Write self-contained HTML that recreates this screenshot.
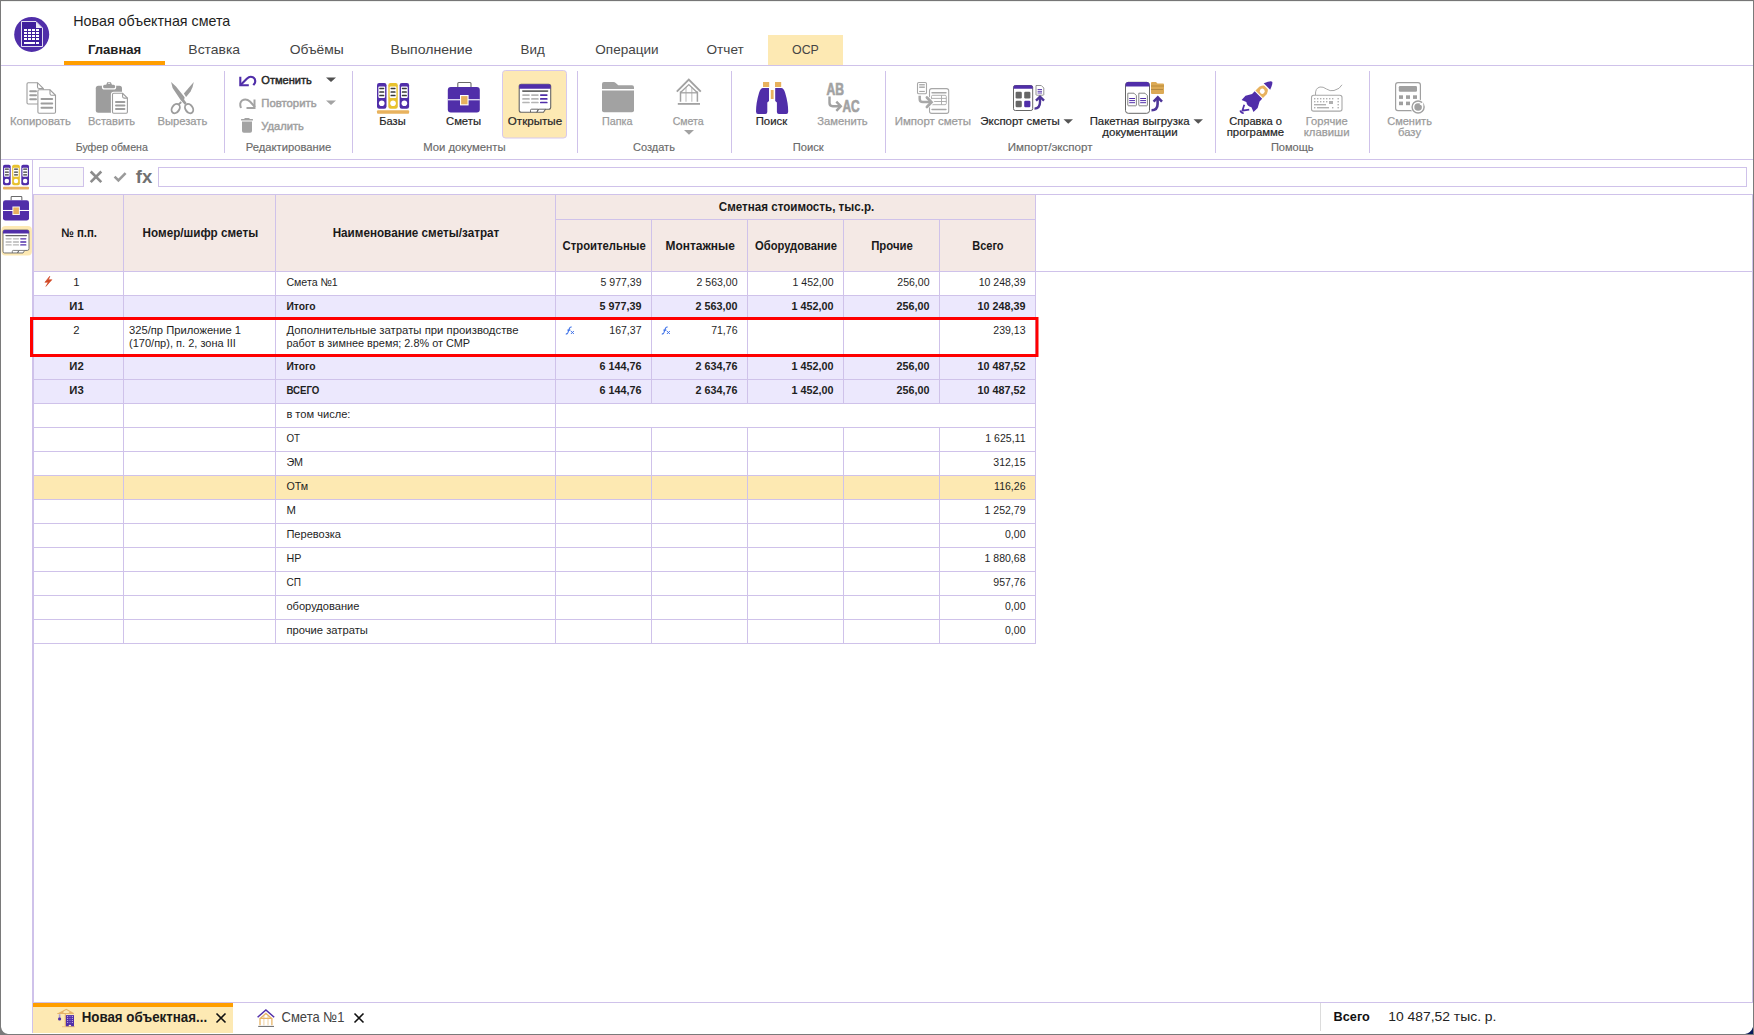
<!DOCTYPE html>
<html><head><meta charset="utf-8"><style>
html,body{margin:0;padding:0;width:1754px;height:1035px;overflow:hidden;background:#fff}
svg{display:block}
text{font-family:"Liberation Sans", sans-serif;white-space:pre}
</style></head><body>
<svg width="1754" height="1035" viewBox="0 0 1754 1035">
<rect width="1754" height="1035" fill="#fff"/>
<rect x="34" y="195" width="1001" height="76" fill="#f4e9e5"/>
<rect x="34" y="296" width="1001" height="23" fill="#ece8fd"/>
<rect x="34" y="356" width="1001" height="23" fill="#ece8fd"/>
<rect x="34" y="380" width="1001" height="23" fill="#ece8fd"/>
<rect x="34" y="476" width="1001" height="23" fill="#fde9b2"/>
<rect x="33" y="194" width="1719" height="1" fill="#cfc2ea"/>
<rect x="33" y="271" width="1719" height="1" fill="#cfc2ea"/>
<rect x="555" y="219" width="481" height="1" fill="#cfc2ea"/>
<rect x="33" y="295" width="1003" height="1" fill="#cfc2ea"/>
<rect x="33" y="319" width="1003" height="1" fill="#cfc2ea"/>
<rect x="33" y="355" width="1003" height="1" fill="#cfc2ea"/>
<rect x="33" y="379" width="1003" height="1" fill="#cfc2ea"/>
<rect x="33" y="403" width="1003" height="1" fill="#cfc2ea"/>
<rect x="33" y="427" width="1003" height="1" fill="#cfc2ea"/>
<rect x="33" y="451" width="1003" height="1" fill="#cfc2ea"/>
<rect x="33" y="475" width="1003" height="1" fill="#cfc2ea"/>
<rect x="33" y="499" width="1003" height="1" fill="#cfc2ea"/>
<rect x="33" y="523" width="1003" height="1" fill="#cfc2ea"/>
<rect x="33" y="547" width="1003" height="1" fill="#cfc2ea"/>
<rect x="33" y="571" width="1003" height="1" fill="#cfc2ea"/>
<rect x="33" y="595" width="1003" height="1" fill="#cfc2ea"/>
<rect x="33" y="619" width="1003" height="1" fill="#cfc2ea"/>
<rect x="33" y="643" width="1003" height="1" fill="#cfc2ea"/>
<rect x="123" y="194" width="1" height="449" fill="#cfc2ea"/>
<rect x="275" y="194" width="1" height="449" fill="#cfc2ea"/>
<rect x="555" y="194" width="1" height="449" fill="#cfc2ea"/>
<rect x="651" y="219" width="1" height="184" fill="#cfc2ea"/>
<rect x="651" y="427" width="1" height="216" fill="#cfc2ea"/>
<rect x="747" y="219" width="1" height="184" fill="#cfc2ea"/>
<rect x="747" y="427" width="1" height="216" fill="#cfc2ea"/>
<rect x="843" y="219" width="1" height="184" fill="#cfc2ea"/>
<rect x="843" y="427" width="1" height="216" fill="#cfc2ea"/>
<rect x="939" y="219" width="1" height="184" fill="#cfc2ea"/>
<rect x="939" y="427" width="1" height="216" fill="#cfc2ea"/>
<rect x="1035" y="194" width="1" height="449" fill="#cfc2ea"/>
<rect x="32" y="160" width="1" height="873" fill="#cfc2ea"/>
<rect x="33" y="194" width="1" height="808" fill="#cfc2ea"/>
<!-- ===== chrome ===== -->
<rect x="0" y="0" width="1754" height="1" fill="#767676"/>
<rect x="1" y="1" width="1752" height="1" fill="#eff1ef"/>
<rect x="0" y="0" width="1" height="1035" fill="#7a7a7a"/>
<rect x="1753" y="0" width="1" height="1035" fill="#7a7a7a"/>
<rect x="0" y="1034" width="1754" height="1" fill="#7a7a7a"/>
<!-- tabs -->
<rect x="768" y="35" width="75" height="30" fill="#fde9b3"/>
<rect x="64" y="61" width="101" height="4" fill="#ff9e00"/>
<rect x="1" y="65" width="1752" height="1" fill="#cfc2ea"/>
<!-- ribbon separators -->
<g fill="#cfc2ea">
<rect x="224" y="71" width="1" height="82"/><rect x="352" y="71" width="1" height="82"/><rect x="577" y="71" width="1" height="82"/>
<rect x="731" y="71" width="1" height="82"/><rect x="885" y="71" width="1" height="82"/><rect x="1215" y="71" width="1" height="82"/>
<rect x="1369" y="71" width="1" height="82"/>
</g>
<rect x="1" y="159" width="1752" height="1" fill="#cfc2ea"/>
<rect x="502.5" y="70.5" width="64" height="67.5" rx="3" fill="#fde9b3" stroke="#d6c8ee" stroke-width="1"/>
<!-- formula bar -->
<rect x="39.5" y="167.5" width="44" height="19" fill="#f8f8f8" stroke="#cfc2ea"/>
<rect x="158.5" y="167.5" width="1588" height="19" fill="#fff" stroke="#cfc2ea"/>
<path d="M90.7 171.5 L101.3 182.2 M101.3 171.5 L90.7 182.2" stroke="#8c8c8c" stroke-width="2.6"/>
<path d="M114.6 176.6 L118.4 180.4 L125.6 173.2" stroke="#9a9a9a" stroke-width="2.6" fill="none"/>
<text x="135.8" y="183" font-size="19" font-weight="bold" fill="#717171" font-family="Liberation Sans" textLength="16.5" lengthAdjust="spacingAndGlyphs">fx</text>
<!-- content right border -->
<rect x="1752" y="194" width="1" height="808" fill="#cfc2ea"/>
<rect x="33" y="1002" width="1720" height="1" fill="#cfc2ea"/>
<!-- red box -->
<rect x="31.5" y="318.5" width="1005.5" height="37" fill="none" stroke="#ff0000" stroke-width="3"/>
<!-- bottom tabs -->
<rect x="33" y="1003" width="200" height="4" fill="#ff9e00"/>
<rect x="33" y="1007" width="200" height="26" fill="#fde9b3"/>
<path d="M216.5 1013.5 L225.5 1022.5 M225.5 1013.5 L216.5 1022.5" stroke="#111" stroke-width="1.6"/>
<path d="M354.5 1013.5 L363.5 1022.5 M363.5 1013.5 L354.5 1022.5" stroke="#111" stroke-width="1.6"/>
<rect x="1320" y="1003" width="1" height="28" fill="#dcdcdc"/>
<path d="M1753 1027 V1034 H1745 Q1751 1033 1753 1027 Z" fill="#0a1a5a"/>
<path d="M1 1027 Q2 1033 8 1034 H1 Z" fill="#7a7a7a"/>

<!-- ===== app logo ===== -->
<circle cx="31.7" cy="34.4" r="17.5" fill="#502ea9"/>
<path d="M21.5 21.5 H36 L42.5 28 V46.5 H21.5 Z" fill="#3f1f9c" stroke="#fff" stroke-width="1" stroke-opacity="0.85"/>
<path d="M36 21.8 L42.2 28 H36 Z" fill="#fff" opacity="0.9"/>
<g fill="#fff">
<rect x="24" y="29" width="3" height="2"/><rect x="28" y="29" width="3" height="2"/><rect x="32" y="29" width="3" height="2"/><rect x="36" y="29" width="3" height="2"/>
<rect x="24" y="32" width="3" height="2"/><rect x="28" y="32" width="3" height="2"/><rect x="32" y="32" width="3" height="2"/><rect x="36" y="32" width="3" height="2"/>
<rect x="24" y="35" width="3" height="2"/><rect x="28" y="35" width="3" height="2"/><rect x="32" y="35" width="3" height="2"/><rect x="36" y="35" width="3" height="2"/>
<rect x="24" y="38" width="3" height="2"/><rect x="28" y="38" width="3" height="2"/><rect x="32" y="38" width="3" height="2"/><rect x="36" y="38" width="3" height="2"/>
<rect x="24" y="42" width="11" height="2"/><rect x="36" y="42" width="3" height="2"/>
</g>

<!-- ===== copy ===== -->
<g stroke="#9d9d9d" fill="#fff" stroke-width="1.1">
<path d="M28.2 82.7 H37.5 L43.3 88.5 V102.8 Q43.3 104 42.1 104 H28.2 Q27 104 27 102.8 V83.9 Q27 82.7 28.2 82.7 Z"/>
<path d="M37.5 82.7 V86.9 Q37.5 88.5 39.1 88.5 H43.3" fill="none"/>
<path d="M39.1 89.8 H50 L55.5 95.3 V112.1 Q55.5 113.3 54.3 113.3 H39.1 Q37.9 113.3 37.9 112.1 V91 Q37.9 89.8 39.1 89.8 Z"/>
<path d="M50 89.8 V93.7 Q50 95.3 51.6 95.3 H55.5" fill="none"/>
</g>
<g stroke="#9d9d9d" stroke-width="2" stroke-linecap="round">
<path d="M30.2 91.2 H36 M30.2 95.3 H36 M30.2 99.3 H36"/>
<path d="M41.5 99.1 H52.2 M41.5 103.4 H52.2 M41.5 107.7 H52.2"/>
</g>
<!-- paste -->
<rect x="95.8" y="85.8" width="26.2" height="27" rx="2.5" fill="#9d9d9d"/>
<rect x="101.9" y="83.9" width="14.3" height="5.6" rx="2.6" fill="#fff"/>
<path d="M106 85.5 L107.2 82.3 H110.9 L112.2 85.5 Z" fill="#9d9d9d"/>
<rect x="103.1" y="84.8" width="12" height="3.4" rx="1.5" fill="#9d9d9d"/>
<rect x="108" y="82.9" width="2.2" height="1.1" rx="0.5" fill="#e6e6e6"/>
<path d="M113.7 93.3 H122.6 L127.4 98.1 V112.1 Q127.4 113.3 126.2 113.3 H113.7 Q112.5 113.3 112.5 112.1 V94.5 Q112.5 93.3 113.7 93.3 Z" fill="#fff" stroke="#fff" stroke-width="3.2"/>
<path d="M113.7 93.3 H122.6 L127.4 98.1 V112.1 Q127.4 113.3 126.2 113.3 H113.7 Q112.5 113.3 112.5 112.1 V94.5 Q112.5 93.3 113.7 93.3 Z" fill="#fff" stroke="#9d9d9d" stroke-width="1.1"/>
<path d="M122.6 93.3 V96.6 Q122.6 98.1 124.1 98.1 H127.4" fill="none" stroke="#9d9d9d" stroke-width="1.1"/>
<path d="M116 102 H124.4 M116 105.5 H124.4 M116 109 H124.4" stroke="#9d9d9d" stroke-width="2" stroke-linecap="round"/>
<!-- scissors -->
<g fill="#9d9d9d">
<path d="M171.1 82.1 L176 86.4 L184.6 97.2 L184.2 99.8 L186.6 102.9 L184.8 104.8 L180.8 100.3 L172.6 88 Z"/>
<path d="M193.8 82.1 Q193 87.5 190.6 91.4 L186.1 97.1 L183.9 93.6 L189 87.4 Z"/>
</g>
<g fill="none" stroke="#9d9d9d" stroke-width="1.9">
<ellipse cx="175.7" cy="108.6" rx="3.6" ry="5" transform="rotate(35 175.7 108.6)"/>
<ellipse cx="189.1" cy="108.6" rx="3.6" ry="5" transform="rotate(-35 189.1 108.6)"/>
<path d="M178.6 104.6 L181.2 102"/>
</g>
<!-- undo / redo / delete -->
<g transform="translate(0.8 -0.8)"><path d="M240 85.5 L246 79.5 Q249 76.5 252 78 Q255.5 80 254 84 L252.5 86" fill="none" stroke="#502ea9" stroke-width="2.1"/>
<path d="M239.5 77.5 V86 H248" fill="none" stroke="#502ea9" stroke-width="2.1"/></g>
<path d="M241 108 Q239 103 242 100.5 Q246 98 250 101.5 L255 107" fill="none" stroke="#a3a3a3" stroke-width="2"/>
<path d="M254.5 99.5 V108 H246.5" fill="none" stroke="#a3a3a3" stroke-width="2"/>
<g fill="#a3a3a3">
<rect x="241" y="119" width="12" height="1.6" rx="0.5"/><rect x="244.5" y="118" width="5" height="1.5"/>
<path d="M242 121.5 H252 V131 Q252 132.8 250.2 132.8 H243.8 Q242 132.8 242 131 Z"/>
</g>
<path d="M326 77.5 H336 L331 82 Z" fill="#505050"/>
<path d="M326 100.5 H336 L331 105 Z" fill="#a3a3a3"/>
<!-- ===== Базы (binders) ===== -->
<g id="binders">
<rect x="377" y="83" width="9.5" height="25.7" rx="2.2" fill="#502ea9"/>
<rect x="378.4" y="86.6" width="6.7" height="11.3" rx="0.8" fill="#fff"/>
<circle cx="381.75" cy="103.3" r="2.8" fill="#fff"/>
<rect x="379.2" y="87.65" width="5.1" height="1.5" rx="0.6" fill="#3a3a3a"/>
<rect x="379.2" y="91.35" width="5.1" height="1.5" rx="0.6" fill="#3a3a3a"/>
<rect x="379.2" y="94.75" width="5.1" height="1.5" rx="0.6" fill="#3a3a3a"/>
<rect x="388.3" y="83" width="9.5" height="25.7" rx="2.2" fill="#e8c22e"/>
<rect x="389.7" y="86.6" width="6.7" height="11.3" rx="0.8" fill="#fff"/>
<circle cx="393.05" cy="103.3" r="2.8" fill="#fff"/>
<rect x="390.5" y="87.65" width="5.1" height="1.5" rx="0.6" fill="#3a3a3a"/>
<rect x="390.5" y="91.35" width="5.1" height="1.5" rx="0.6" fill="#3a3a3a"/>
<rect x="390.5" y="94.75" width="5.1" height="1.5" rx="0.6" fill="#3a3a3a"/>
<rect x="399.6" y="83" width="9.5" height="25.7" rx="2.2" fill="#502ea9"/>
<rect x="401.0" y="86.6" width="6.7" height="11.3" rx="0.8" fill="#fff"/>
<circle cx="404.35" cy="103.3" r="2.8" fill="#fff"/>
<rect x="401.8" y="87.65" width="5.1" height="1.5" rx="0.6" fill="#3a3a3a"/>
<rect x="401.8" y="91.35" width="5.1" height="1.5" rx="0.6" fill="#3a3a3a"/>
<rect x="401.8" y="94.75" width="5.1" height="1.5" rx="0.6" fill="#3a3a3a"/>
<rect x="377" y="110.3" width="32.1" height="3.5" rx="1" fill="#e8b25e"/>
</g>
<!-- ===== Сметы (briefcase) ===== -->
<g id="brief">
<path d="M457.8 87 V83.5 Q457.8 82.5 458.8 82.5 H470 Q471 82.5 471 83.5 V87" fill="none" stroke="#6a6a6a" stroke-width="1.1"/>
<rect x="447.8" y="87" width="32" height="25.5" rx="3" fill="#502ea9"/>
<rect x="447.8" y="99.2" width="32" height="1.1" fill="#fff"/>
<rect x="460" y="95" width="8.6" height="10.4" fill="#fff"/>
<rect x="461.1" y="96.1" width="6.4" height="8.2" fill="#e8b25e"/>
</g>
<!-- ===== Открытые (window) ===== -->
<g transform="translate(519.2 84.3)">
<path d="M2 0 H29.5 Q31.5 0 31.5 2 V22.9 Q31.5 24.9 29.5 24.9 H26.3 L24.3 28 H2 Q0 28 0 26 V2 Q0 0 2 0 Z" fill="#fff" stroke="#666" stroke-width="1.1"/>
<path d="M0 4.4 V2 Q0 0 2 0 H29.5 Q31.5 0 31.5 2 V4.4 Z" fill="#502ea9"/>
<path d="M11.3 28 V26 Q11.3 24.9 12.4 24.9 H19.1 L17.6 28 M17.8 28 L19.4 24.9 H26.3" fill="none" stroke="#666" stroke-width="1"/>
<path d="M3.6 6.8 H28.4" stroke="#666" stroke-width="1.6" stroke-linecap="round"/>
<path d="M3.8 10.8 H9.8 M12.7 10.8 H18.7 M3.8 14.6 H9.8 M12.7 14.6 H18.7 M3.8 18.2 H9.8 M12.7 18.2 H18.7" stroke="#b5b5b5" stroke-width="1.7" stroke-linecap="round"/>
<path d="M21.6 10.8 H27.6 M21.6 14.6 H27.6 M21.6 18.2 H27.6" stroke="#502ea9" stroke-width="1.7" stroke-linecap="round"/>
</g>
<!-- ===== Папка (folder) ===== -->
<path d="M602 84 Q602 82.1 603.9 82.1 H613.3 Q614.8 82.1 616 83.2 L618.3 85.3 H632 Q634 85.3 634 87.3 V89 H602 Z" fill="#a2a2a2"/>
<path d="M602 90.5 H634 V110.2 Q634 112.2 632 112.2 H604 Q602 112.2 602 110.2 Z" fill="#a2a2a2"/>
<!-- ===== Смета (house) ===== -->
<g fill="none">
<path d="M676.8 91.6 L688.8 79.6 L700.8 91.6" stroke="#a2a2a2" stroke-width="1.9"/>
<path d="M686 87 V101.8 M691.8 87 V101.8" stroke="#cacaca" stroke-width="1.3"/>
<path d="M680.5 92.5 L688.8 84.6 L697.2 92.5" stroke="#a2a2a2" stroke-width="1.4"/>
<path d="M680.5 91.5 V101.8 M697.4 91.5 V101.8" stroke="#a2a2a2" stroke-width="1.5"/>
<path d="M680.5 92.8 H697.4" stroke="#a2a2a2" stroke-width="1.3"/>
</g>
<rect x="677.8" y="103" width="22.2" height="1.8" fill="#a2a2a2"/>
<path d="M684 130 H694 L689 134.8 Z" fill="#a2a2a2"/>
<!-- ===== Поиск (binoculars) ===== -->
<g fill="#502ea9">
<path d="M763 88 H769 V101 L767.3 102.5 V112 Q767.3 114 765.3 114 H758 Q756 114 756 111.5 Q756 103 759 93 Q760.5 88 763 88 Z"/>
<path d="M781.2 88 H775.2 V101 L776.9 102.5 V112 Q776.9 114 778.9 114 H786.2 Q788.2 114 788.2 111.5 Q788.2 103 785.2 93 Q783.7 88 781.2 88 Z"/>
</g>
<g fill="#e8b25e">
<rect x="763" y="82" width="6.2" height="5"/><rect x="775" y="82" width="6.2" height="5"/>
<rect x="770.8" y="90" width="2.8" height="9"/>
</g>
<!-- ===== Заменить (AB->AC) ===== -->
<text x="826.5" y="95" font-size="17" font-weight="bold" fill="#a2a2a2" stroke="#a2a2a2" stroke-width="0.7" font-family="Liberation Sans" textLength="17.5" lengthAdjust="spacingAndGlyphs">AB</text>
<text x="842.5" y="112" font-size="17" font-weight="bold" fill="#a2a2a2" stroke="#a2a2a2" stroke-width="0.7" font-family="Liberation Sans" textLength="17.2" lengthAdjust="spacingAndGlyphs">AC</text>
<path d="M829.5 96.5 V103 Q829.5 106.2 832.7 106.2 H840" fill="none" stroke="#a2a2a2" stroke-width="2.4"/>
<path d="M836.3 101.6 L840.8 106.2 L836.3 110.8" fill="none" stroke="#a2a2a2" stroke-width="2.4"/>
<!-- ===== Импорт сметы ===== -->
<g>
<rect x="917.5" y="82.5" width="9" height="11.3" rx="1.3" fill="#fff" stroke="#a8a8a8" stroke-width="1.1"/>
<rect x="919.2" y="84.1" width="5.6" height="1.1" fill="#a8a8a8"/><rect x="919.2" y="85.4" width="5.6" height="1.6" fill="#d0d0d0"/><rect x="919.2" y="87" width="5.6" height="1" fill="#b0b0b0"/><rect x="919.2" y="90.9" width="5.6" height="1.1" fill="#a8a8a8"/>
<rect x="929.5" y="88.6" width="19.2" height="24.8" rx="2.2" fill="#fff" stroke="#a8a8a8" stroke-width="1.1"/>
<rect x="931.3" y="92" width="15.4" height="1.4" rx="0.7" fill="#a8a8a8"/><rect x="931.3" y="108.8" width="15.4" height="1.4" rx="0.7" fill="#a8a8a8"/>
<rect x="931.5" y="95.3" width="14.8" height="9.4" rx="1.2" fill="none" stroke="#a8a8a8" stroke-width="0.9"/>
<path d="M931.5 98.4 H946.3 M931.5 101.5 H946.3 M941.5 95.3 V104.7" stroke="#a8a8a8" stroke-width="0.9"/>
<path d="M919.7 95.8 V99 Q919.7 102.1 923 102.1 H931.5" fill="none" stroke="#fff" stroke-width="4.2"/>
<path d="M926.9 97.5 L931.8 102.2 L926.9 107" fill="none" stroke="#fff" stroke-width="4.2" stroke-linecap="round"/>
<path d="M919.7 95.8 V99 Q919.7 102.1 923 102.1 H931" fill="none" stroke="#a8a8a8" stroke-width="2.5"/>
<path d="M926.9 97.5 L931.5 102.2 L926.9 107" fill="none" stroke="#a8a8a8" stroke-width="2.7" stroke-linecap="round"/>
</g>
<!-- ===== Экспорт сметы ===== -->
<g>
<rect x="1013.5" y="85.5" width="19.2" height="25" rx="1.8" fill="#fff" stroke="#666" stroke-width="1"/>
<path d="M1013.5 87.3 Q1013.5 85.2 1015.5 85.2 H1030.7 Q1032.7 85.2 1032.7 87.3 V88.8 H1013.5 Z" fill="#502ea9"/>
<rect x="1015.6" y="91.8" width="6.2" height="6.6" rx="1.2" fill="#666"/><rect x="1024.2" y="91.8" width="6.2" height="6.6" rx="1.2" fill="#666"/>
<rect x="1015.6" y="100.7" width="6.2" height="6.6" rx="1.2" fill="#666"/><rect x="1024.2" y="100.7" width="6.2" height="6.6" rx="1.2" fill="#502ea9"/>
<path d="M1036 85.5 H1041.3 L1043.8 88 V94.5 Q1043.8 95.2 1043 95.2 H1036.8 Q1036 95.2 1036 94.5 Z" fill="#fff" stroke="#888" stroke-width="0.9"/>
<path d="M1037.6 89.5 H1042 M1037.6 91.3 H1042 M1037.6 93 H1042" stroke="#502ea9" stroke-width="0.9"/>
<path d="M1034.5 108.6 Q1040 108.6 1040 102 V97.5" fill="none" stroke="#4d3598" stroke-width="2.4"/>
<path d="M1036 100.6 L1040 96.6 L1044 100.6" fill="none" stroke="#4d3598" stroke-width="2.4"/>
</g>
<!-- ===== Пакетная выгрузка ===== -->
<g>
<rect x="1125.5" y="82.3" width="24" height="31" rx="2.8" fill="#fff" stroke="#666" stroke-width="1"/>
<path d="M1125.5 85 Q1125.5 82 1128.3 82 H1146.7 Q1149.5 82 1149.5 85 V86.6 H1125.5 Z" fill="#502ea9"/>
<path d="M1127.8 93.2 H1134 L1136.4 95.6 V105 Q1136.4 105.8 1135.6 105.8 H1128.6 Q1127.8 105.8 1127.8 105 Z" fill="#fff" stroke="#777" stroke-width="0.9"/>
<path d="M1138.8 93.2 H1145 L1147.4 95.6 V105 Q1147.4 105.8 1146.6 105.8 H1139.6 Q1138.8 105.8 1138.8 105 Z" fill="#fff" stroke="#777" stroke-width="0.9"/>
<path d="M1129.2 98.5 H1135 M1129.2 100.6 H1135 M1129.2 102.7 H1135 M1140.2 98.5 H1146 M1140.2 100.6 H1146 M1140.2 102.7 H1146" stroke="#502ea9" stroke-width="1"/>
<path d="M1151 83 Q1151 82 1152 82 H1156 L1157.5 83.5 H1163 Q1164 83.5 1164 84.5 V93 Q1164 94 1163 94 H1152 Q1151 94 1151 93 Z" fill="#dcaa55"/>
<rect x="1151" y="85.5" width="13" height="1" fill="#b88a3a"/>
<path d="M1151.5 89.5 H1163.5" stroke="#7a5a2a" stroke-width="0.8" stroke-dasharray="1 1"/>
<path d="M1151.5 110.3 Q1157.6 110.3 1157.6 104 V98.5" fill="none" stroke="#4d3598" stroke-width="2.6"/>
<path d="M1153.6 101.6 L1157.8 97.4 L1162 101.6" fill="none" stroke="#4d3598" stroke-width="2.6"/>
</g>
<path d="M1063.5 119.3 H1073 L1068.25 123.8 Z" fill="#555"/>
<path d="M1193.5 119.3 H1203 L1198.25 123.8 Z" fill="#555"/>
<!-- ===== Rocket ===== -->
<g transform="translate(1259 94.5) rotate(45)">
<path d="M-4.6 -11.2 Q-1.5 -18.5 0.3 -18.3 Q2 -18 4.6 -11.2 Z" fill="#502ea9"/>
<path d="M-5.3 -0.3 L-5.2 -6 Q-4 -9 -2.5 -10 H2.5 Q4 -9 5.2 -6 L5.3 -0.3 Z" fill="#e8b25e"/>
<circle cx="0" cy="-4.6" r="2.5" fill="#fff"/>
<path d="M-5.3 0.8 L-5.3 4.5 L-8.6 10.5 L-8.4 16.2 L-3.6 14.3 Q0 17 3.6 14.3 L8.4 16.2 L8.6 10.5 L5.3 4.5 L5.3 0.8 Z" fill="#502ea9"/>
<path d="M-3.2 17.6 L-0.4 23.2 L3.8 17.6" fill="none" stroke="#502ea9" stroke-width="1.7"/>
<path d="M-2 24.6 Q0.2 26 2.4 24" fill="none" stroke="#502ea9" stroke-width="1.5"/>
</g>
<!-- ===== Keyboard ===== -->
<g fill="none" stroke="#a8a8a8">
<rect x="1311.5" y="95.3" width="30.5" height="15.8" rx="2.2" stroke-width="1.1"/>
<path d="M1315.5 95 Q1315 88 1320 87 Q1323 86.5 1326.5 89 Q1330 91.5 1334 90.5 Q1340 89 1342 84.8" stroke-width="1"/>
</g>
<g fill="#b0b0b0">
<rect x="1314" y="98" width="1.4" height="1.4"/><rect x="1317" y="98" width="1.4" height="1.4"/><rect x="1320" y="98" width="1.4" height="1.4"/><rect x="1323" y="98" width="1.4" height="1.4"/><rect x="1326" y="98" width="1.4" height="1.4"/><rect x="1329" y="98" width="1.4" height="1.4"/><rect x="1332" y="98" width="1.4" height="1.4"/><rect x="1337.5" y="98" width="1.4" height="1.4"/>
<rect x="1314" y="101" width="1.4" height="1.4"/><rect x="1317" y="101" width="1.4" height="1.4"/><rect x="1320" y="101" width="1.4" height="1.4"/><rect x="1323" y="101" width="1.4" height="1.4"/><rect x="1326" y="101" width="1.4" height="1.4"/><rect x="1329" y="101" width="4" height="3"/><rect x="1337.5" y="101" width="1.4" height="1.4"/>
<rect x="1314" y="104" width="12" height="1.4"/><rect x="1337.5" y="104" width="1.4" height="1.4"/>
<rect x="1314" y="107" width="1.4" height="1.4"/><rect x="1317" y="107" width="12" height="1.4"/><rect x="1332" y="107" width="1.4" height="1.4"/><rect x="1337.5" y="107" width="1.4" height="1.4"/>
</g>
<!-- ===== Calculator ===== -->
<g>
<rect x="1395.6" y="82.6" width="24.8" height="28" rx="2.4" fill="#fff" stroke="#a0a0a0" stroke-width="1.2"/>
<rect x="1398.8" y="86" width="18.2" height="5.8" rx="1.2" fill="#a0a0a0"/>
<g fill="#a0a0a0">
<rect x="1399" y="95.3" width="4" height="3.6"/><rect x="1406" y="95.3" width="4" height="3.6"/><rect x="1413" y="95.3" width="4" height="3.6"/>
<rect x="1399" y="101.6" width="4" height="3.6"/><rect x="1406" y="101.6" width="4" height="3.6"/>
</g>
<circle cx="1418.1" cy="107" r="7.6" fill="#fff"/>
<circle cx="1418.1" cy="107" r="6" fill="none" stroke="#a0a0a0" stroke-width="1.4"/>
<circle cx="1418.1" cy="107" r="3.8" fill="#a0a0a0"/>
<path d="M1419.5 104.6 L1423.2 101.8 L1423.4 106.2 Z" fill="#fff"/>
</g>
<!-- ===== sidebar ===== -->
<g transform="translate(3 164.8) scale(0.81 0.8)">
<rect x="0" y="0" width="9.5" height="25.7" rx="2.2" fill="#502ea9"/>
<rect x="1.4" y="3.6" width="6.7" height="11.3" rx="0.8" fill="#fff"/>
<circle cx="4.75" cy="20.3" r="2.8" fill="#fff"/>
<rect x="2.2" y="4.6000000000000005" width="5.1" height="1.6" rx="0.6" fill="#3a3a3a"/>
<rect x="2.2" y="8.299999999999999" width="5.1" height="1.6" rx="0.6" fill="#3a3a3a"/>
<rect x="2.2" y="11.7" width="5.1" height="1.6" rx="0.6" fill="#3a3a3a"/>
<rect x="11.3" y="0" width="9.5" height="25.7" rx="2.2" fill="#e8c22e"/>
<rect x="12.700000000000001" y="3.6" width="6.7" height="11.3" rx="0.8" fill="#fff"/>
<circle cx="16.05" cy="20.3" r="2.8" fill="#fff"/>
<rect x="13.5" y="4.6000000000000005" width="5.1" height="1.6" rx="0.6" fill="#3a3a3a"/>
<rect x="13.5" y="8.299999999999999" width="5.1" height="1.6" rx="0.6" fill="#3a3a3a"/>
<rect x="13.5" y="11.7" width="5.1" height="1.6" rx="0.6" fill="#3a3a3a"/>
<rect x="22.6" y="0" width="9.5" height="25.7" rx="2.2" fill="#502ea9"/>
<rect x="24.0" y="3.6" width="6.7" height="11.3" rx="0.8" fill="#fff"/>
<circle cx="27.35" cy="20.3" r="2.8" fill="#fff"/>
<rect x="24.8" y="4.6000000000000005" width="5.1" height="1.6" rx="0.6" fill="#3a3a3a"/>
<rect x="24.8" y="8.299999999999999" width="5.1" height="1.6" rx="0.6" fill="#3a3a3a"/>
<rect x="24.8" y="11.7" width="5.1" height="1.6" rx="0.6" fill="#3a3a3a"/>
<rect x="0" y="27.3" width="32.1" height="3.6" rx="1" fill="#e8b25e"/>
</g>
<g transform="translate(3 196.2) scale(0.8125 0.8)">
<path d="M10 5 V1.5 Q10 0.5 11 0.5 H22.2 Q23.2 0.5 23.2 1.5 V5" fill="none" stroke="#6a6a6a" stroke-width="1.3"/>
<rect x="0" y="5" width="32" height="25.5" rx="3" fill="#502ea9"/>
<rect x="0" y="17.2" width="32" height="1.3" fill="#fff"/>
<rect x="11.6" y="12.9" width="9.1" height="10.6" fill="#fff"/>
<rect x="12.7" y="14" width="6.9" height="8.4" fill="#e8b25e"/>
</g>
<rect x="1.5" y="226" width="30.4" height="29.6" rx="4" fill="#fde9b3"/>
<g transform="translate(3 230) scale(0.825 0.82)">
<path d="M2 0 H29.5 Q31.5 0 31.5 2 V22.9 Q31.5 24.9 29.5 24.9 H26.3 L24.3 28 H2 Q0 28 0 26 V2 Q0 0 2 0 Z" fill="#fff" stroke="#666" stroke-width="1.1"/>
<path d="M0 4.4 V2 Q0 0 2 0 H29.5 Q31.5 0 31.5 2 V4.4 Z" fill="#502ea9"/>
<path d="M11.3 28 V26 Q11.3 24.9 12.4 24.9 H19.1 L17.6 28 M17.8 28 L19.4 24.9 H26.3" fill="none" stroke="#666" stroke-width="1"/>
<path d="M3.6 6.8 H28.4" stroke="#666" stroke-width="1.6" stroke-linecap="round"/>
<path d="M3.8 10.8 H9.8 M12.7 10.8 H18.7 M3.8 14.6 H9.8 M12.7 14.6 H18.7 M3.8 18.2 H9.8 M12.7 18.2 H18.7" stroke="#b5b5b5" stroke-width="1.7" stroke-linecap="round"/>
<path d="M21.6 10.8 H27.6 M21.6 14.6 H27.6 M21.6 18.2 H27.6" stroke="#502ea9" stroke-width="1.7" stroke-linecap="round"/>
</g>
<!-- ===== table small icons ===== -->
<path d="M49.8 276.2 L44.9 282.3 H48.2 L45.9 286.4 L51.9 279.7 H48.5 Z" fill="#d24a26" stroke="#d24a26" stroke-width="0.6" stroke-linejoin="round"/>
<g transform="translate(0 0)" fill="none" stroke="#3a6fe8" stroke-width="1.1"><path d="M565.8 333.7 Q567.2 334.4 568 332.4 L569.4 328.4 Q570.1 326.7 571.6 327.1 M567.4 330.1 H570.4"/><path d="M570.9 331 L573.9 334 M573.9 331 L570.9 334" stroke-width="0.95"/></g>
<g transform="translate(96 0)" fill="none" stroke="#3a6fe8" stroke-width="1.1"><path d="M565.8 333.7 Q567.2 334.4 568 332.4 L569.4 328.4 Q570.1 326.7 571.6 327.1 M567.4 330.1 H570.4"/><path d="M570.9 331 L573.9 334 M573.9 331 L570.9 334" stroke-width="0.95"/></g>
<!-- ===== bottom tab icons ===== -->
<g>
<path d="M57.3 1013.5 H73.8 M58.5 1013.5 L66.3 1009.3 L73.5 1013.5 M65.3 1013.5 V1026.5 M61.5 1013.5 L63.5 1011.5 M69 1011.5 L71 1013.5" fill="none" stroke="#e6b46a" stroke-width="1.1"/>
<path d="M59.6 1014.3 V1017.2" stroke="#a89cd0" stroke-width="1.6"/>
<circle cx="59.6" cy="1018.9" r="1.6" fill="#502ea9"/>
<rect x="65.9" y="1015.1" width="8.1" height="11.6" fill="#502ea9"/>
<g fill="#e8d8f8" opacity="0.9">
<circle cx="67.6" cy="1016.6" r="0.55"/><circle cx="72.4" cy="1016.6" r="0.55"/><circle cx="67.6" cy="1018.5" r="0.55"/><circle cx="72.4" cy="1018.5" r="0.55"/>
<circle cx="67.6" cy="1020.5" r="0.55"/><circle cx="72.4" cy="1020.5" r="0.55"/><circle cx="67.6" cy="1022.5" r="0.55"/><circle cx="72.4" cy="1022.5" r="0.55"/>
</g>
<g fill="#8a70c8" opacity="0.8"><rect x="68.6" y="1016.2" width="2.8" height="0.8"/><rect x="68.6" y="1018.1" width="2.8" height="0.8"/><rect x="68.6" y="1020.1" width="2.8" height="0.8"/><rect x="68.6" y="1022.1" width="2.8" height="0.8"/></g>
<ellipse cx="69.9" cy="1025.6" rx="1.3" ry="0.8" fill="#fff3c0"/>
<rect x="62" y="1026.3" width="13" height="0.9" fill="#e6b46a" opacity="0.8"/>
</g>
<g>
<path d="M257.6 1017.3 L265.9 1010 L274.2 1017.3" fill="none" stroke="#502ea9" stroke-width="1.5"/>
<path d="M263.9 1016 V1025.3 M268 1016 V1025.3" fill="none" stroke="#f0d2a0" stroke-width="1"/>
<path d="M260.2 1018.5 L265.9 1013.4 L271.7 1018.5 M259.8 1018.3 H272.2 M260 1018 V1025.3 M271.9 1018 V1025.3" fill="none" stroke="#e8b466" stroke-width="1.3"/>
<rect x="258.2" y="1025.9" width="15.8" height="1.1" fill="#777"/>
</g>

<text x="73.31" y="26.20" font-size="14.4" fill="#1e1e1e" textLength="157.00" lengthAdjust="spacingAndGlyphs">Новая объектная смета</text>
<text x="88.00" y="53.60" font-size="13.4" fill="#222" font-weight="bold" textLength="53.19" lengthAdjust="spacingAndGlyphs">Главная</text>
<text x="188.36" y="53.90" font-size="13.4" fill="#444" textLength="51.77" lengthAdjust="spacingAndGlyphs">Вставка</text>
<text x="289.70" y="53.90" font-size="13.4" fill="#444" textLength="54.15" lengthAdjust="spacingAndGlyphs">Объёмы</text>
<text x="390.55" y="53.90" font-size="13.4" fill="#444" textLength="81.92" lengthAdjust="spacingAndGlyphs">Выполнение</text>
<text x="520.60" y="53.90" font-size="13.4" fill="#444" textLength="24.21" lengthAdjust="spacingAndGlyphs">Вид</text>
<text x="595.30" y="53.90" font-size="13.4" fill="#444" textLength="63.28" lengthAdjust="spacingAndGlyphs">Операции</text>
<text x="706.50" y="53.90" font-size="13.4" fill="#444" textLength="37.24" lengthAdjust="spacingAndGlyphs">Отчет</text>
<text x="792.00" y="53.90" font-size="13.4" fill="#444" textLength="26.84" lengthAdjust="spacingAndGlyphs">ОСР</text>
<text x="9.90" y="124.70" font-size="11.3" fill="#9b9b9b" stroke="#9b9b9b" stroke-width="0.25" textLength="61.09" lengthAdjust="spacingAndGlyphs">Копировать</text>
<text x="87.90" y="124.70" font-size="11.3" fill="#9b9b9b" stroke="#9b9b9b" stroke-width="0.25" textLength="47.19" lengthAdjust="spacingAndGlyphs">Вставить</text>
<text x="157.40" y="124.70" font-size="11.3" fill="#9b9b9b" stroke="#9b9b9b" stroke-width="0.25" textLength="49.99" lengthAdjust="spacingAndGlyphs">Вырезать</text>
<text x="379.30" y="124.70" font-size="11.3" fill="#262626" stroke="#262626" stroke-width="0.2" textLength="26.32" lengthAdjust="spacingAndGlyphs">Базы</text>
<text x="446.00" y="124.70" font-size="11.3" fill="#262626" stroke="#262626" stroke-width="0.2" textLength="35.02" lengthAdjust="spacingAndGlyphs">Сметы</text>
<text x="507.80" y="124.70" font-size="11.3" fill="#262626" stroke="#262626" stroke-width="0.2" textLength="54.39" lengthAdjust="spacingAndGlyphs">Открытые</text>
<text x="602.00" y="124.90" font-size="11.3" fill="#9b9b9b" stroke="#9b9b9b" stroke-width="0.25" textLength="30.52" lengthAdjust="spacingAndGlyphs">Папка</text>
<text x="672.70" y="124.90" font-size="11.3" fill="#9b9b9b" stroke="#9b9b9b" stroke-width="0.25" textLength="31.03" lengthAdjust="spacingAndGlyphs">Смета</text>
<text x="755.70" y="124.90" font-size="11.3" fill="#262626" stroke="#262626" stroke-width="0.2" textLength="31.44" lengthAdjust="spacingAndGlyphs">Поиск</text>
<text x="817.20" y="124.90" font-size="11.3" fill="#9b9b9b" stroke="#9b9b9b" stroke-width="0.25" textLength="50.49" lengthAdjust="spacingAndGlyphs">Заменить</text>
<text x="894.70" y="124.90" font-size="11.3" fill="#9b9b9b" stroke="#9b9b9b" stroke-width="0.25" textLength="76.42" lengthAdjust="spacingAndGlyphs">Импорт сметы</text>
<text x="980.30" y="125.10" font-size="11.3" fill="#262626" stroke="#262626" stroke-width="0.2" textLength="79.32" lengthAdjust="spacingAndGlyphs">Экспорт сметы</text>
<text x="1089.70" y="125.10" font-size="11.3" fill="#262626" stroke="#262626" stroke-width="0.2" textLength="99.78" lengthAdjust="spacingAndGlyphs">Пакетная выгрузка</text>
<text x="1102.30" y="135.60" font-size="11.3" fill="#262626" stroke="#262626" stroke-width="0.2" textLength="75.42" lengthAdjust="spacingAndGlyphs">документации</text>
<text x="1229.20" y="124.80" font-size="11.3" fill="#262626" stroke="#262626" stroke-width="0.2" textLength="52.88" lengthAdjust="spacingAndGlyphs">Справка о</text>
<text x="1226.70" y="135.50" font-size="11.3" fill="#262626" stroke="#262626" stroke-width="0.2" textLength="57.48" lengthAdjust="spacingAndGlyphs">программе</text>
<text x="1305.80" y="124.80" font-size="11.3" fill="#9b9b9b" stroke="#9b9b9b" stroke-width="0.25" textLength="41.98" lengthAdjust="spacingAndGlyphs">Горячие</text>
<text x="1303.70" y="135.50" font-size="11.3" fill="#9b9b9b" stroke="#9b9b9b" stroke-width="0.25" textLength="45.91" lengthAdjust="spacingAndGlyphs">клавиши</text>
<text x="1387.20" y="124.80" font-size="11.3" fill="#9b9b9b" stroke="#9b9b9b" stroke-width="0.25" textLength="44.69" lengthAdjust="spacingAndGlyphs">Сменить</text>
<text x="1398.00" y="135.50" font-size="11.3" fill="#9b9b9b" stroke="#9b9b9b" stroke-width="0.25" textLength="23.05" lengthAdjust="spacingAndGlyphs">базу</text>
<text x="261.30" y="83.90" font-size="11.3" fill="#262626" stroke="#262626" stroke-width="0.45" textLength="50.59" lengthAdjust="spacingAndGlyphs">Отменить</text>
<text x="261.30" y="106.70" font-size="11.3" fill="#a0a0a0" stroke="#a0a0a0" stroke-width="0.45" textLength="55.29" lengthAdjust="spacingAndGlyphs">Повторить</text>
<text x="261.30" y="129.70" font-size="11.3" fill="#a0a0a0" stroke="#a0a0a0" stroke-width="0.45" textLength="42.59" lengthAdjust="spacingAndGlyphs">Удалить</text>
<text x="75.70" y="151.00" font-size="11.3" fill="#6a6a6a" stroke="#6a6a6a" stroke-width="0.15" textLength="72.13" lengthAdjust="spacingAndGlyphs">Буфер обмена</text>
<text x="245.70" y="150.60" font-size="11.3" fill="#6a6a6a" stroke="#6a6a6a" stroke-width="0.15" textLength="85.58" lengthAdjust="spacingAndGlyphs">Редактирование</text>
<text x="423.20" y="150.90" font-size="11.3" fill="#6a6a6a" stroke="#6a6a6a" stroke-width="0.15" textLength="82.42" lengthAdjust="spacingAndGlyphs">Мои документы</text>
<text x="633.00" y="150.80" font-size="11.3" fill="#6a6a6a" stroke="#6a6a6a" stroke-width="0.15" textLength="41.89" lengthAdjust="spacingAndGlyphs">Создать</text>
<text x="792.80" y="150.80" font-size="11.3" fill="#6a6a6a" stroke="#6a6a6a" stroke-width="0.15" textLength="30.94" lengthAdjust="spacingAndGlyphs">Поиск</text>
<text x="1007.80" y="150.80" font-size="11.3" fill="#6a6a6a" stroke="#6a6a6a" stroke-width="0.15" textLength="84.68" lengthAdjust="spacingAndGlyphs">Импорт/экспорт</text>
<text x="1270.90" y="150.50" font-size="11.3" fill="#6a6a6a" stroke="#6a6a6a" stroke-width="0.15" textLength="42.69" lengthAdjust="spacingAndGlyphs">Помощь</text>
<text x="61.20" y="236.90" font-size="12.4" fill="#1a1a1a" font-weight="bold" textLength="35.81" lengthAdjust="spacingAndGlyphs">№ п.п.</text>
<text x="142.60" y="236.90" font-size="12.4" fill="#1a1a1a" font-weight="bold" textLength="115.55" lengthAdjust="spacingAndGlyphs">Номер/шифр сметы</text>
<text x="332.70" y="236.90" font-size="12.4" fill="#1a1a1a" font-weight="bold" textLength="166.56" lengthAdjust="spacingAndGlyphs">Наименование сметы/затрат</text>
<text x="718.80" y="211.30" font-size="12.4" fill="#1a1a1a" font-weight="bold" textLength="155.41" lengthAdjust="spacingAndGlyphs">Сметная стоимость, тыс.р.</text>
<text x="562.60" y="249.90" font-size="12.4" fill="#1a1a1a" font-weight="bold" textLength="83.10" lengthAdjust="spacingAndGlyphs">Строительные</text>
<text x="665.50" y="249.90" font-size="12.4" fill="#1a1a1a" font-weight="bold" textLength="69.40" lengthAdjust="spacingAndGlyphs">Монтажные</text>
<text x="755.00" y="249.90" font-size="12.4" fill="#1a1a1a" font-weight="bold" textLength="81.90" lengthAdjust="spacingAndGlyphs">Оборудование</text>
<text x="871.20" y="249.90" font-size="12.4" fill="#1a1a1a" font-weight="bold" textLength="41.70" lengthAdjust="spacingAndGlyphs">Прочие</text>
<text x="972.20" y="249.90" font-size="12.4" fill="#1a1a1a" font-weight="bold" textLength="31.42" lengthAdjust="spacingAndGlyphs">Всего</text>
<text x="76.50" y="286.20" font-size="11.3" fill="#1f1f1f" text-anchor="middle">1</text>
<text x="286.40" y="286.20" font-size="11.3" fill="#1f1f1f" textLength="51.37" lengthAdjust="spacingAndGlyphs">Смета №1</text>
<text x="641.50" y="286.20" font-size="11.3" fill="#1f1f1f" textLength="40.98" lengthAdjust="spacingAndGlyphs" text-anchor="end">5 977,39</text>
<text x="737.50" y="286.20" font-size="11.3" fill="#1f1f1f" textLength="40.98" lengthAdjust="spacingAndGlyphs" text-anchor="end">2 563,00</text>
<text x="833.50" y="286.20" font-size="11.3" fill="#1f1f1f" textLength="40.98" lengthAdjust="spacingAndGlyphs" text-anchor="end">1 452,00</text>
<text x="929.50" y="286.20" font-size="11.3" fill="#1f1f1f" textLength="32.20" lengthAdjust="spacingAndGlyphs" text-anchor="end">256,00</text>
<text x="1025.50" y="286.20" font-size="11.3" fill="#1f1f1f" textLength="46.84" lengthAdjust="spacingAndGlyphs" text-anchor="end">10 248,39</text>
<text x="76.50" y="310.00" font-size="11.3" fill="#1f1f1f" font-weight="bold" text-anchor="middle">И1</text>
<text x="286.40" y="310.00" font-size="11.3" fill="#1f1f1f" font-weight="bold" textLength="29.11" lengthAdjust="spacingAndGlyphs">Итого</text>
<text x="641.50" y="310.00" font-size="11.3" fill="#1f1f1f" font-weight="bold" textLength="41.95" lengthAdjust="spacingAndGlyphs" text-anchor="end">5 977,39</text>
<text x="737.50" y="310.00" font-size="11.3" fill="#1f1f1f" font-weight="bold" textLength="41.95" lengthAdjust="spacingAndGlyphs" text-anchor="end">2 563,00</text>
<text x="833.50" y="310.00" font-size="11.3" fill="#1f1f1f" font-weight="bold" textLength="41.95" lengthAdjust="spacingAndGlyphs" text-anchor="end">1 452,00</text>
<text x="929.50" y="310.00" font-size="11.3" fill="#1f1f1f" font-weight="bold" textLength="32.96" lengthAdjust="spacingAndGlyphs" text-anchor="end">256,00</text>
<text x="1025.50" y="310.00" font-size="11.3" fill="#1f1f1f" font-weight="bold" textLength="47.95" lengthAdjust="spacingAndGlyphs" text-anchor="end">10 248,39</text>
<text x="76.50" y="333.90" font-size="11.3" fill="#1f1f1f" text-anchor="middle">2</text>
<text x="641.50" y="333.90" font-size="11.3" fill="#1f1f1f" textLength="32.20" lengthAdjust="spacingAndGlyphs" text-anchor="end">167,37</text>
<text x="737.50" y="333.90" font-size="11.3" fill="#1f1f1f" textLength="26.35" lengthAdjust="spacingAndGlyphs" text-anchor="end">71,76</text>
<text x="1025.50" y="333.90" font-size="11.3" fill="#1f1f1f" textLength="32.20" lengthAdjust="spacingAndGlyphs" text-anchor="end">239,13</text>
<text x="129.00" y="333.90" font-size="11.3" fill="#1f1f1f" textLength="112.08" lengthAdjust="spacingAndGlyphs">325/пр Приложение 1</text>
<text x="129.00" y="346.70" font-size="11.3" fill="#1f1f1f" textLength="106.94" lengthAdjust="spacingAndGlyphs">(170/пр), п. 2, зона III</text>
<text x="286.40" y="333.90" font-size="11.3" fill="#1f1f1f" textLength="232.18" lengthAdjust="spacingAndGlyphs">Дополнительные затраты при производстве</text>
<text x="286.40" y="346.70" font-size="11.3" fill="#1f1f1f" textLength="183.62" lengthAdjust="spacingAndGlyphs">работ в зимнее время; 2.8% от СМР</text>
<text x="76.50" y="370.00" font-size="11.3" fill="#1f1f1f" font-weight="bold" text-anchor="middle">И2</text>
<text x="286.40" y="370.00" font-size="11.3" fill="#1f1f1f" font-weight="bold" textLength="29.11" lengthAdjust="spacingAndGlyphs">Итого</text>
<text x="641.50" y="370.00" font-size="11.3" fill="#1f1f1f" font-weight="bold" textLength="41.95" lengthAdjust="spacingAndGlyphs" text-anchor="end">6 144,76</text>
<text x="737.50" y="370.00" font-size="11.3" fill="#1f1f1f" font-weight="bold" textLength="41.95" lengthAdjust="spacingAndGlyphs" text-anchor="end">2 634,76</text>
<text x="833.50" y="370.00" font-size="11.3" fill="#1f1f1f" font-weight="bold" textLength="41.95" lengthAdjust="spacingAndGlyphs" text-anchor="end">1 452,00</text>
<text x="929.50" y="370.00" font-size="11.3" fill="#1f1f1f" font-weight="bold" textLength="32.96" lengthAdjust="spacingAndGlyphs" text-anchor="end">256,00</text>
<text x="1025.50" y="370.00" font-size="11.3" fill="#1f1f1f" font-weight="bold" textLength="47.95" lengthAdjust="spacingAndGlyphs" text-anchor="end">10 487,52</text>
<text x="76.50" y="394.00" font-size="11.3" fill="#1f1f1f" font-weight="bold" text-anchor="middle">И3</text>
<text x="286.40" y="394.00" font-size="11.3" fill="#1f1f1f" font-weight="bold" textLength="33.02" lengthAdjust="spacingAndGlyphs">ВСЕГО</text>
<text x="641.50" y="394.00" font-size="11.3" fill="#1f1f1f" font-weight="bold" textLength="41.95" lengthAdjust="spacingAndGlyphs" text-anchor="end">6 144,76</text>
<text x="737.50" y="394.00" font-size="11.3" fill="#1f1f1f" font-weight="bold" textLength="41.95" lengthAdjust="spacingAndGlyphs" text-anchor="end">2 634,76</text>
<text x="833.50" y="394.00" font-size="11.3" fill="#1f1f1f" font-weight="bold" textLength="41.95" lengthAdjust="spacingAndGlyphs" text-anchor="end">1 452,00</text>
<text x="929.50" y="394.00" font-size="11.3" fill="#1f1f1f" font-weight="bold" textLength="32.96" lengthAdjust="spacingAndGlyphs" text-anchor="end">256,00</text>
<text x="1025.50" y="394.00" font-size="11.3" fill="#1f1f1f" font-weight="bold" textLength="47.95" lengthAdjust="spacingAndGlyphs" text-anchor="end">10 487,52</text>
<text x="286.40" y="418.00" font-size="11.3" fill="#1f1f1f" textLength="64.04" lengthAdjust="spacingAndGlyphs">в том числе:</text>
<text x="286.40" y="442.00" font-size="11.3" fill="#1f1f1f" textLength="13.61" lengthAdjust="spacingAndGlyphs">ОТ</text>
<text x="1025.50" y="442.00" font-size="11.3" fill="#1f1f1f" textLength="40.20" lengthAdjust="spacingAndGlyphs" text-anchor="end">1 625,11</text>
<text x="286.40" y="466.00" font-size="11.3" fill="#1f1f1f" textLength="16.69" lengthAdjust="spacingAndGlyphs">ЭМ</text>
<text x="1025.50" y="466.00" font-size="11.3" fill="#1f1f1f" textLength="32.20" lengthAdjust="spacingAndGlyphs" text-anchor="end">312,15</text>
<text x="286.40" y="490.00" font-size="11.3" fill="#1f1f1f" textLength="21.73" lengthAdjust="spacingAndGlyphs">ОТм</text>
<text x="1025.50" y="490.00" font-size="11.3" fill="#1f1f1f" textLength="31.42" lengthAdjust="spacingAndGlyphs" text-anchor="end">116,26</text>
<text x="286.40" y="514.00" font-size="11.3" fill="#1f1f1f" textLength="9.41" lengthAdjust="spacingAndGlyphs">М</text>
<text x="1025.50" y="514.00" font-size="11.3" fill="#1f1f1f" textLength="40.98" lengthAdjust="spacingAndGlyphs" text-anchor="end">1 252,79</text>
<text x="286.40" y="538.00" font-size="11.3" fill="#1f1f1f" textLength="54.60" lengthAdjust="spacingAndGlyphs">Перевозка</text>
<text x="1025.50" y="538.00" font-size="11.3" fill="#1f1f1f" textLength="20.49" lengthAdjust="spacingAndGlyphs" text-anchor="end">0,00</text>
<text x="286.40" y="562.00" font-size="11.3" fill="#1f1f1f" textLength="14.91" lengthAdjust="spacingAndGlyphs">НР</text>
<text x="1025.50" y="562.00" font-size="11.3" fill="#1f1f1f" textLength="40.98" lengthAdjust="spacingAndGlyphs" text-anchor="end">1 880,68</text>
<text x="286.40" y="586.00" font-size="11.3" fill="#1f1f1f" textLength="14.51" lengthAdjust="spacingAndGlyphs">СП</text>
<text x="1025.50" y="586.00" font-size="11.3" fill="#1f1f1f" textLength="32.20" lengthAdjust="spacingAndGlyphs" text-anchor="end">957,76</text>
<text x="286.40" y="610.00" font-size="11.3" fill="#1f1f1f" textLength="73.08" lengthAdjust="spacingAndGlyphs">оборудование</text>
<text x="1025.50" y="610.00" font-size="11.3" fill="#1f1f1f" textLength="20.49" lengthAdjust="spacingAndGlyphs" text-anchor="end">0,00</text>
<text x="286.40" y="634.00" font-size="11.3" fill="#1f1f1f" textLength="81.52" lengthAdjust="spacingAndGlyphs">прочие затраты</text>
<text x="1025.50" y="634.00" font-size="11.3" fill="#1f1f1f" textLength="20.49" lengthAdjust="spacingAndGlyphs" text-anchor="end">0,00</text>
<text x="81.70" y="1022.00" font-size="14.4" fill="#1a1a1a" font-weight="bold" textLength="125.42" lengthAdjust="spacingAndGlyphs">Новая объектная...</text>
<text x="281.50" y="1021.70" font-size="14.4" fill="#444" textLength="63.00" lengthAdjust="spacingAndGlyphs">Смета №1</text>
<text x="1333.60" y="1021.00" font-size="13.4" fill="#111" font-weight="bold" textLength="36.17" lengthAdjust="spacingAndGlyphs">Всего</text>
<text x="1388.26" y="1021.00" font-size="13.4" fill="#222" textLength="108.18" lengthAdjust="spacingAndGlyphs">10 487,52 тыс. р.</text>
</svg>
</body></html>
